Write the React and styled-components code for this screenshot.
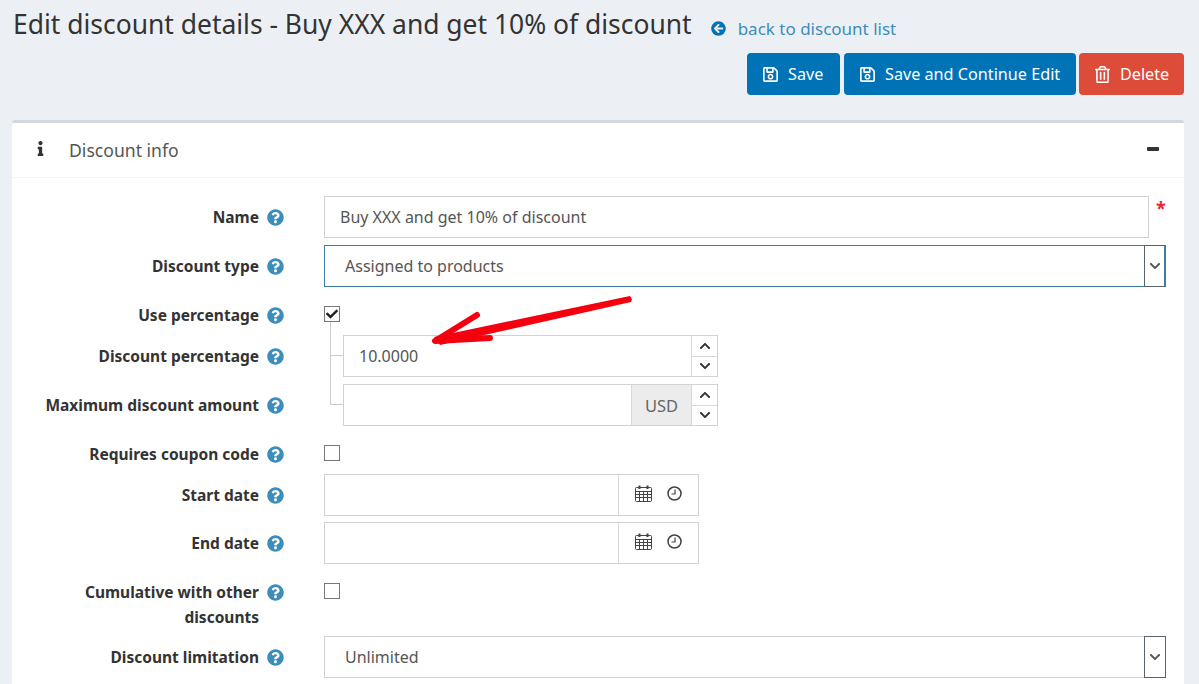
import React from 'react';
import styled, { createGlobalStyle } from 'styled-components';
import {
    FaArrowCircleLeft, FaCheck, FaChevronDown, FaChevronUp, FaInfo,
    FaQuestionCircle, FaRegSave, FaRegTrashAlt,
} from 'react-icons/fa';

const GlobalStyle = createGlobalStyle`
    html, body {
        margin: 0;
        height: 100%;
        overflow: hidden;
    }
    body {
        background: #ecf0f5;
        color: #333;
        font-family: "Noto Sans", "Open Sans", sans-serif;
    }
`
const Page = styled.div`
    position: relative;
    height: 684px;
    overflow: hidden;
    padding: 0 15px 0 12px;
`
const TitleRow = styled.div`
    display: flex;
    align-items: center;
    box-sizing: border-box;
    height: 53px;
    padding: 0 0 6px 1px;
`
const Title = styled.h1`
    margin: 0;
    font-size: 26.45px;
    font-weight: 400;
    white-space: nowrap;
`
const BackLink = styled.a`
    display: flex;
    align-items: center;
    gap: 12px;
    margin: 9px 0 0 19px;
    color: #3c8dbc;
    font-size: 17px;
    svg {
        color: #0073b7;
        font-size: 15px;
    }
`
const Toolbar = styled.div`
    display: flex;
    justify-content: flex-end;
    gap: 4px;
    height: 42px;
    margin-bottom: 25px;
`
const Button = styled.button`
    display: flex;
    align-items: center;
    gap: 9px;
    width: ${props => props.$width}px;
    margin-left: ${props => props.$offset || 0}px;
    padding: 0 0 0 15px;
    border: none;
    border-radius: 4px;
    background: ${props => props.$color};
    color: white;
    font-family: inherit;
    font-size: 16.2px;
    white-space: nowrap;
    svg {
        font-size: 17px;
    }
`
const Card = styled.section`
    border-top: 3px solid #d2d6de;
    border-radius: 3px;
    background: white;
    height: 600px;
`
const CardHeader = styled.header`
    display: flex;
    align-items: center;
    height: 54px;
    padding: 0 25px 0 21px;
    border-bottom: 1px solid #f4f4f4;
    font-size: 17.6px;
    color: #555;
`
const CardTitle = styled.span`
    flex: 1;
    margin-left: 21px;
`
const InfoIcon = styled.span`
    display: flex;
    font-size: 15px;
    color: #333;
    margin-top: -4px;
`
const CollapseIcon = styled.span`
    width: 12px;
    height: 4px;
    margin-top: -3px;
    border-radius: 1px;
    background: #333;
`
const Form = styled.div`
    display: flex;
    flex-direction: column;
    padding: 18px 18px 0 0;
`
const Row = styled.div`
    display: grid;
    grid-template-columns: 247px 65px 1fr;
    min-height: ${props => props.$height || 42}px;
    margin-bottom: ${props => props.$gap ?? 7}px;
`
const Label = styled.label`
    padding: 9px 0 0 20px;
    text-align: right;
    font-size: 15.5px;
    font-weight: 700;
    line-height: 25px;
    color: #333;
`
const HelpCell = styled.div`
    padding: 13px 0 0 8px;
    color: #3c8dbc;
    font-size: 17px;
    line-height: 0;
`
const InputBox = styled.div`
    flex: 1;
    display: flex;
    align-items: center;
    box-sizing: border-box;
    height: 42px;
    padding-left: 15px;
    border: 1px solid #d2d2d2;
    font-size: 16px;
    color: #555;
    background: white;
`
const InputLine = styled.div`
    display: flex;
    align-items: flex-start;
`
const Required = styled.span`
    flex: none;
    width: 10px;
    margin: 3px 0 0 7px;
    color: #f01f2f;
    font-size: 18px;
    font-weight: 700;
    line-height: 1;
`
const SelectBox = styled.div`
    display: flex;
    align-items: stretch;
    box-sizing: border-box;
    height: 42px;
    border: 1px solid ${props => props.$focused ? '#3c7ea6' : '#d2d2d2'};
    font-size: 16px;
    color: #555;
`
const SelectValue = styled.span`
    flex: 1;
    align-self: center;
    padding-left: 20px;
`
const SelectArrow = styled.span`
    display: flex;
    align-items: center;
    justify-content: center;
    box-sizing: border-box;
    width: 22px;
    margin: -1px;
    border: 1px solid #59636b;
    border-right: ${props => props.$focused ? '2px solid #3c7ea6' : '1px solid #59636b'};
    color: #555;
    font-size: 12px;
`
const CheckBox = styled.span`
    display: flex;
    align-items: center;
    justify-content: center;
    box-sizing: border-box;
    width: 16px;
    height: 16px;
    margin-top: 12px;
    border: 1px solid #777;
    color: #222;
    font-size: 12px;
`
const Nested = styled.div`
    position: relative;
    padding-left: 19px;
    &::before {
        content: '';
        position: absolute;
        left: 6px;
        top: 20px;
        width: 13px;
        border-top: 1px solid #ccc;
    }
    &::after {
        content: '';
        position: absolute;
        left: 6px;
        top: ${props => props.$lineTop}px;
        height: ${props => props.$lineHeight}px;
        border-left: 1px solid #ccc;
    }
`
const NumberBox = styled.div`
    display: flex;
    box-sizing: border-box;
    width: 375px;
    height: 42px;
    border: 1px solid #d2d2d2;
    font-size: 16px;
    color: #555;
`
const NumberValue = styled.span`
    flex: 1;
    align-self: center;
    padding-left: 15px;
`
const Addon = styled.span`
    display: flex;
    align-items: center;
    justify-content: center;
    box-sizing: border-box;
    width: 60px;
    background: #ececec;
    border-left: 1px solid #d8d8d8;
    color: #666;
    font-size: 16.5px;
`
const Spinner = styled.span`
    display: flex;
    flex-direction: column;
    width: 25px;
    border-left: 1px solid #d8d8d8;
`
const SpinButton = styled.span`
    flex: 1;
    display: flex;
    align-items: center;
    justify-content: center;
    color: #333;
    font-size: 12px;
    & + & {
        border-top: 1px solid #d8d8d8;
    }
`
const DateBox = styled.div`
    display: flex;
    box-sizing: border-box;
    width: 375px;
    height: 42px;
    border: 1px solid #d2d2d2;
`
const DateValue = styled.span`
    flex: 1;
`
const DateIcons = styled.span`
    display: flex;
    align-items: center;
    gap: 15px;
    width: 80px;
    box-sizing: border-box;
    padding: 0 0 3px 16px;
    border-left: 1px solid #d8d8d8;
    color: #444;
`
const Annotation = styled.svg`
    position: absolute;
    left: 0;
    top: 0;
    pointer-events: none;
`

function CalendarIcon () {
    return (
        <svg width="17" height="17" viewBox="0 0 17 17" fill="none" stroke="currentColor">
            <rect x="0.5" y="2.5" width="16" height="14" rx="1" />
            <path d="M0.5 6.5H16.5M0.5 9.5H16.5M0.5 12.5H16.5M4.5 6.5V16.5M8.5 6.5V16.5M12.5 6.5V16.5" />
            <path d="M4.5 0.5V4M12.5 0.5V4" strokeWidth="2" />
        </svg>
    )
}

function ClockIcon () {
    return (
        <svg width="15" height="15" viewBox="0 0 15 15" fill="none" stroke="currentColor" strokeWidth="1.5">
            <circle cx="7.5" cy="7.5" r="6.5" />
            <path d="M8 3.5V8H4.5" strokeWidth="1.2" />
        </svg>
    )
}

function Help () {
    return <HelpCell><FaQuestionCircle /></HelpCell>
}

function Spin () {
    return (
        <Spinner>
            <SpinButton><FaChevronUp /></SpinButton>
            <SpinButton><FaChevronDown /></SpinButton>
        </Spinner>
    )
}

function DateField () {
    return (
        <DateBox>
            <DateValue />
            <DateIcons><CalendarIcon /><ClockIcon /></DateIcons>
        </DateBox>
    )
}

function Select ({ value, focused }) {
    return (
        <SelectBox $focused={focused}>
            <SelectValue>{value}</SelectValue>
            <SelectArrow $focused={focused}><FaChevronDown /></SelectArrow>
        </SelectBox>
    )
}

export default function App () {
    return (
        <Page>
            <GlobalStyle />
            <TitleRow>
                <Title>Edit discount details - Buy XXX and get 10% of discount</Title>
                <BackLink><FaArrowCircleLeft />back to discount list</BackLink>
            </TitleRow>
            <Toolbar>
                <Button $color="#0073b7" $width={93}><FaRegSave />Save</Button>
                <Button $color="#0073b7" $width={232}><FaRegSave />Save and Continue Edit</Button>
                <Button $color="#dd4b39" $width={105} $offset={-1}><FaRegTrashAlt />Delete</Button>
            </Toolbar>
            <Card>
                <CardHeader>
                    <InfoIcon><FaInfo /></InfoIcon>
                    <CardTitle>Discount info</CardTitle>
                    <CollapseIcon />
                </CardHeader>
                <Form>
                    <Row>
                        <Label>Name</Label>
                        <Help />
                        <InputLine>
                            <InputBox>Buy XXX and get 10% of discount</InputBox>
                            <Required>*</Required>
                        </InputLine>
                    </Row>
                    <Row>
                        <Label>Discount type</Label>
                        <Help />
                        <Select value="Assigned to products" focused />
                    </Row>
                    <Row $height={34}>
                        <Label>Use percentage</Label>
                        <Help />
                        <div><CheckBox><FaCheck /></CheckBox></div>
                    </Row>
                    <Row>
                        <Label>Discount percentage</Label>
                        <Help />
                        <Nested $lineTop={-13} $lineHeight={62}>
                            <NumberBox>
                                <NumberValue>10.0000</NumberValue>
                                <Spin />
                            </NumberBox>
                        </Nested>
                    </Row>
                    <Row>
                        <Label>Maximum discount amount</Label>
                        <Help />
                        <Nested $lineTop={-7} $lineHeight={28}>
                            <NumberBox>
                                <NumberValue />
                                <Addon>USD</Addon>
                                <Spin />
                            </NumberBox>
                        </Nested>
                    </Row>
                    <Row $height={34}>
                        <Label>Requires coupon code</Label>
                        <Help />
                        <div><CheckBox /></div>
                    </Row>
                    <Row $gap={6}>
                        <Label>Start date</Label>
                        <Help />
                        <DateField />
                    </Row>
                    <Row>
                        <Label>End date</Label>
                        <Help />
                        <DateField />
                    </Row>
                    <Row $height={58} $gap={6}>
                        <Label>Cumulative with other discounts</Label>
                        <Help />
                        <div><CheckBox /></div>
                    </Row>
                    <Row>
                        <Label>Discount limitation</Label>
                        <Help />
                        <Select value="Unlimited" />
                    </Row>
                </Form>
            </Card>
            <Annotation width="1199" height="684" viewBox="0 0 1199 684">
                <path d="M630 296 Q633 299 631 302 L440 345 L434 337 Z" fill="#f5000f" />
                <path d="M477 315 L435 341 L490 338" stroke="#f5000f" strokeWidth="6" strokeLinecap="round" strokeLinejoin="round" fill="none" />
            </Annotation>
        </Page>
    )
}
